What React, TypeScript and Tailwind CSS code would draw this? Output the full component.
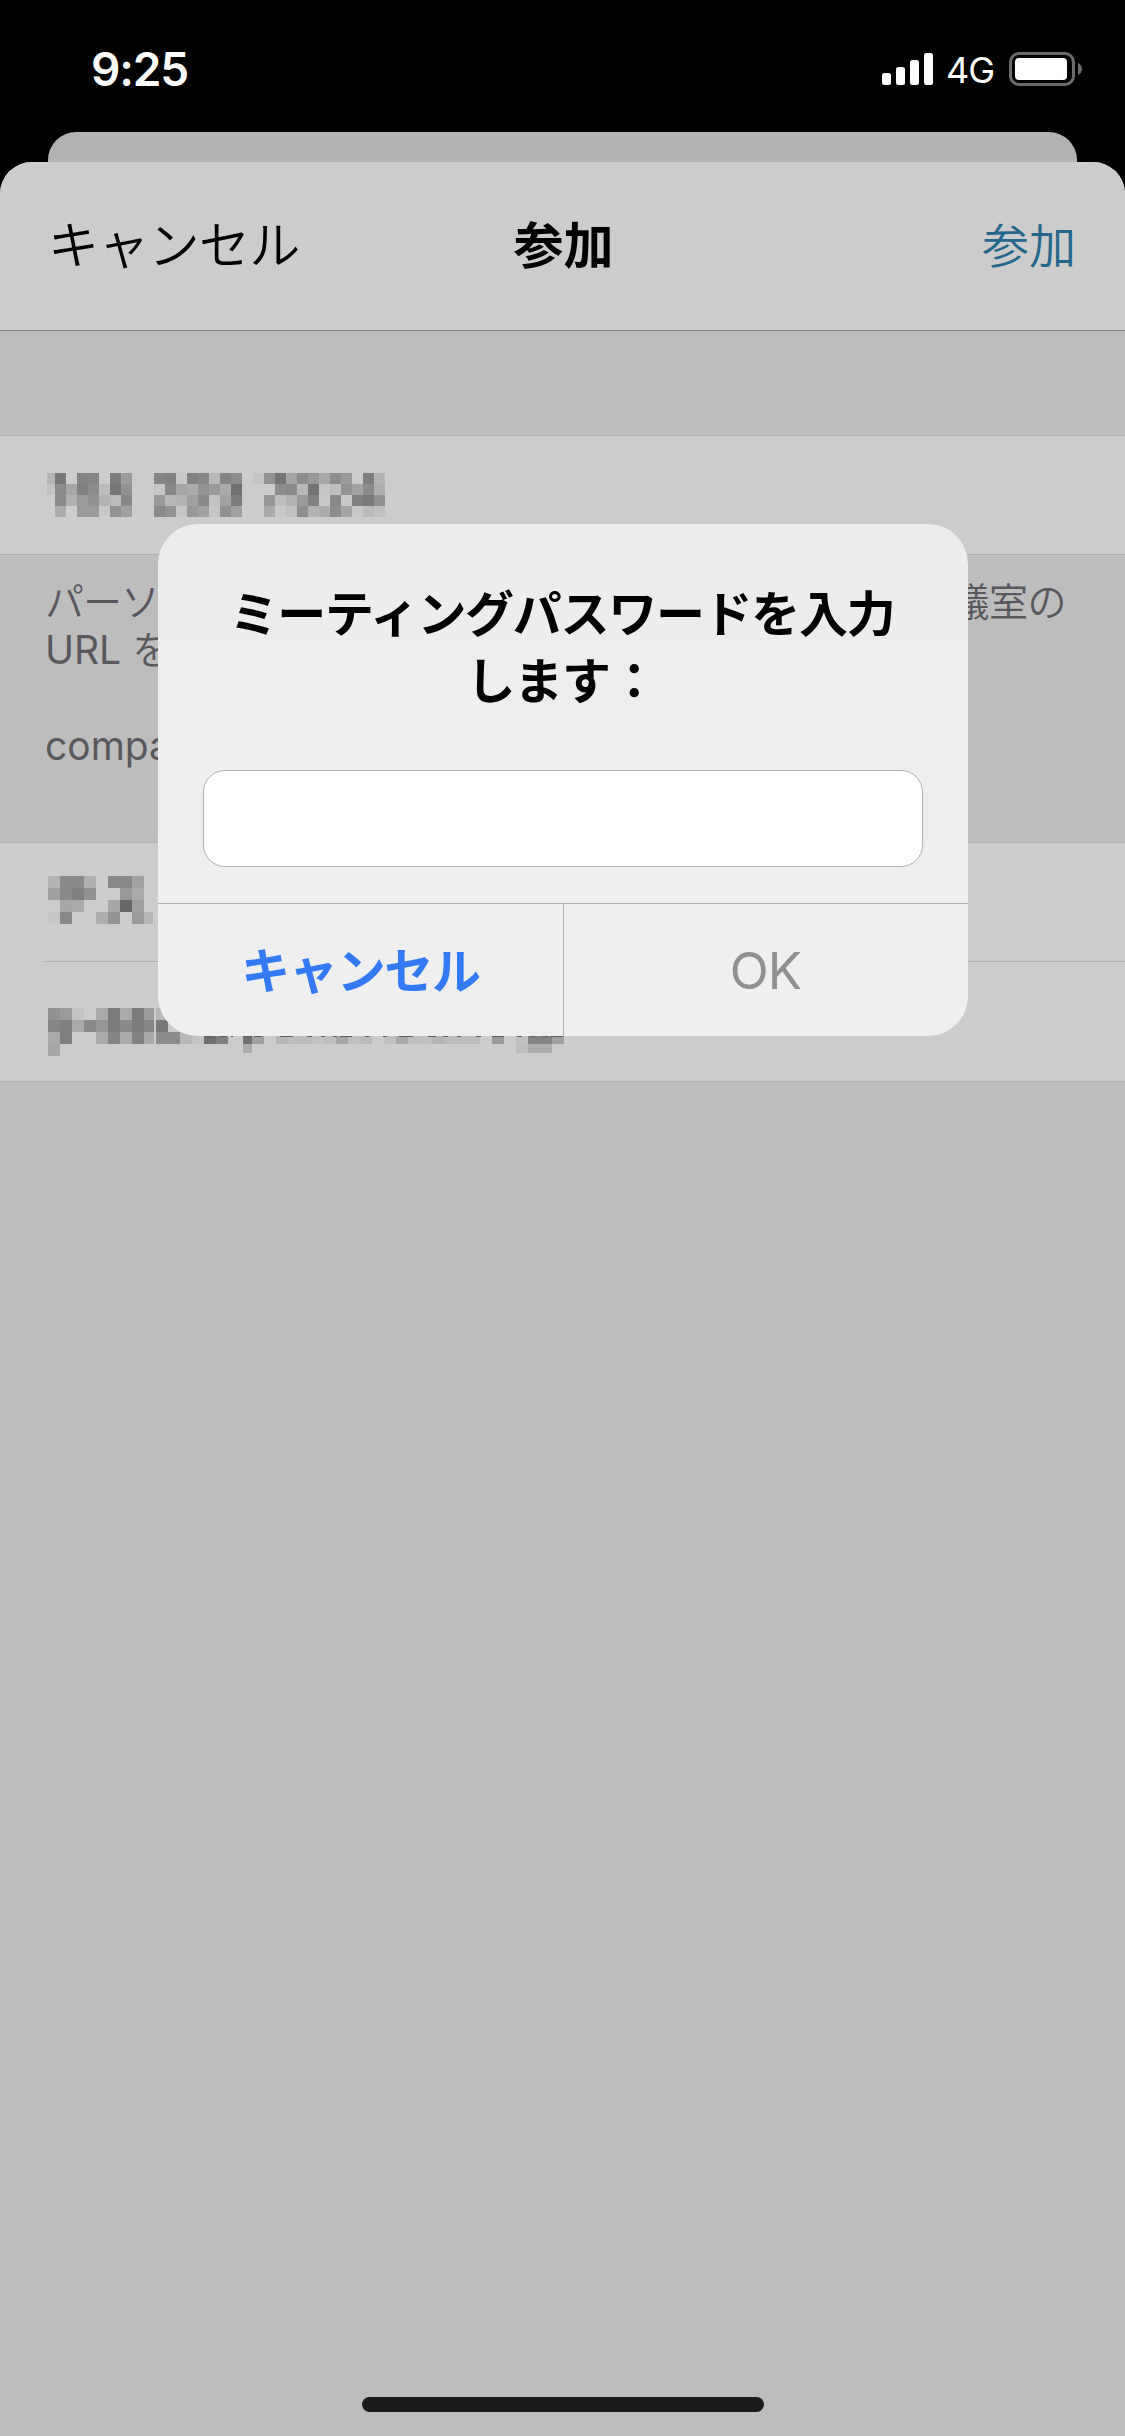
import React from 'react';

// Each token is the grey level of one cell, "--" leaves the cell empty
const meetingId = {
    lead: ['b4', 'c2'],
    rows: [
        '78 -- 84 86 -- 7c 9c -- -- 86 82 c8 82 88 b8 84 8c -- c4 92 76 a4 8c 98 a8 8c 9a -- 80 b4',
        '8c a6 80 8c bc 76 92 -- -- c6 88 a6 ac 92 9a aa 70 -- -- -- 8c 8a b8 74 c6 be 92 a2 8c ae',
        '8c b0 9c 92 b4 ba 88 -- -- 9a b8 b2 a0 8a c2 a2 7c -- -- 96 be b2 9a 82 c8 88 c8 80 7a 92',
        'ac -- 9a 9a c8 92 a0 -- -- 8a 92 c6 98 a2 c6 90 a0 -- -- aa c8 c0 8e b2 ac 8c a4 c8 ba c0',
    ],
};

const displayName = [
    'b4 8a 8a b0 -- 88 88 a2',
    'a0 8a 80 92 -- -- 98 aa',
    '-- a6 aa -- -- a6 68 a0',
    'c6 88 -- -- ae 94 -- 9a b8',
];

const emailStart = [
    '92 9a c4 -- aa 7c aa 7c 9c',
    '86 80 aa 88 96 7c 8a 7c 86',
    'aa 80 -- -- aa 84 aa 82 a8',
    'a6',
];

const emailRest = [
    'b8',
    '78',
    '8c 8c b8 c4 6e 80',
];

const emailTail = 'b6 bc bb c2 be a6 c0 ba -- c0 a8 be c0 b4 bc bc bc -- 9a -- c0 84 84 a0';

const emailMarks = [
    [204, 8], [220, 6], [231, 2], [244, 8], [254, 8], [280, 13], [307, 5], [321, 4], [333, 4], [340, 12],
    [365, 4], [383, 4], [399, 14], [428, 8], [443, 5], [457, 4], [476, 5], [492, 12], [517, 5], [531, 4],
    [543, 5], [551, 12],
];

function Cells({ rows, size, x = 0, y = 0 }: { rows: string[]; size: number; x?: number; y?: number }) {
    return (
        <>
            {rows.map((row, r) =>
                row.split(' ').map((c, i) =>
                    c === '--' ? null : (
                        <rect key={`${r}-${i}`} x={x + i * size} y={y + r * size} width={size} height={size} fill={`#${c}${c}${c}`} />
                    )
                )
            )}
        </>
    );
}

function StatusBar() {
    return (
        <div className="flex h-[132px] items-start justify-between pr-[43px] pl-[91px]">
            <span className="mt-[41px] text-[46px] leading-[56px] font-semibold tracking-[-1.2px] text-white">9:25</span>
            <div className="mt-[52px] flex h-[34px] items-start">
                <svg width="51" height="34" fill="#fff">
                    <rect x="0" y="21" width="9" height="12" rx="2.5" />
                    <rect x="14" y="15" width="9" height="18" rx="2.5" />
                    <rect x="28" y="8" width="9" height="25" rx="2.5" />
                    <rect x="42" y="1" width="9" height="32" rx="2.5" />
                </svg>
                <span className="-mt-[4px] ml-[13px] w-[63px] text-[36px] leading-[44px] tracking-[-1px] text-white">4G</span>
                <svg width="73" height="34">
                    <rect x="1.5" y="1.5" width="63" height="31" rx="8.5" fill="none" stroke="#6b6b6b" strokeWidth="3" />
                    <rect x="6" y="6" width="52" height="22" rx="4" fill="#fff" />
                    <path d="M69 11c2.6 1.2 4 3.5 4 6s-1.400 4.800-4 6z" fill="#6b6b6b" />
                </svg>
            </div>
        </div>
    );
}

function PasswordAlert() {
    return (
        <div className="absolute top-[524px] left-[158px] flex h-[512px] w-[810px] flex-col overflow-hidden rounded-[40px] bg-gradient-to-b from-[#ebedec] to-[#efefef]">
            <h2 className="mt-[57px] h-[189px] pr-[2px] text-center text-[49px] leading-[67px] font-bold tracking-[-1.3px] text-black">
                ミーティングパスワードを入力
                <br />
                します：
            </h2>
            <input
                type="text"
                className="mx-[45px] h-[97px] rounded-[22px] border border-[#b0b0b1] bg-white px-5 text-[42px] outline-none"
            />
            <div className="mt-auto flex h-[133px] border-t border-[#b0b0b2]">
                <button className="w-[406px] border-r border-[#b0b0b2] pt-[3px] text-[49px] font-bold tracking-[-1.3px] text-[#347af7]">キャンセル</button>
                <button className="flex-1 pt-[2px] pr-[1px] text-[51px] tracking-[-1px] text-[#909090]">OK</button>
            </div>
        </div>
    );
}

export default function App() {
    return (
        <div className="relative flex h-[2436px] w-[1125px] flex-col overflow-hidden bg-black font-['Inter','Noto_Sans_CJK_JP',sans-serif]">
            <StatusBar />
            <div className="mx-[48px] -mb-[40px] h-[70px] shrink-0 rounded-t-[28px] bg-[#b2b2b2]" />

            <main className="relative flex flex-1 flex-col rounded-t-[32px] bg-[#bdbdbd]">
                <header className="grid h-[169px] grid-cols-3 items-center rounded-t-[32px] border-b border-[#848486] bg-[#cccccc] pr-[49px] pl-[48px] text-[51px]">
                    <button className="justify-self-start font-[350] tracking-[-0.7px] text-black">キャンセル</button>
                    <h1 className="justify-self-center pt-[1px] pl-[3px] text-[50px] font-bold text-black">参加</h1>
                    <button className="justify-self-end text-[47px] font-[350] text-[#24678c]">参加</button>
                </header>

                <div className="mt-[104px] h-[120px] border-y border-[#b0b0b2] bg-[#cccccc] pt-[37px] pl-[47px]">
                    <svg width="338" height="44" shapeRendering="crispEdges">
                        {meetingId.lead.map((c, i) => (
                            <rect key={i} y={i * 11} width="8" height="11" fill={`#${c}${c}${c}`} />
                        ))}
                        <Cells rows={meetingId.rows} size={11} x={8} />
                    </svg>
                </div>

                <div className="h-[287px] pt-[23px] pr-[59px] pl-[45px] text-[39px] leading-[48px] text-[#59595d]">
                    <p className="flex justify-between font-[350] whitespace-nowrap">
                        <span className="tracking-[-1px]">パーソナ</span>
                        <span className="tracking-[-0.5px]">議室の</span>
                    </p>
                    <p>URL <span className="font-[350]">を</span></p>
                    <p className="mt-[48px]">compa</p>
                </div>

                <div className="h-[240px] border-y border-[#b0b0b2] bg-[#cccccc] pl-[45px]">
                    <div className="h-[119px] border-b border-[#b0b0b2] pt-[33px] pl-[3px]">
                        <svg width="105" height="48" shapeRendering="crispEdges">
                            <Cells rows={displayName} size={12} />
                        </svg>
                    </div>
                    <div className="h-[119px] pt-[46px] pl-[3px]">
                        <svg width="528" height="48" viewBox="48 0 528 48" shapeRendering="crispEdges">
                            <Cells rows={emailStart} size={12} x={48} />
                            <rect x="154" width="2" height="36" fill="#cccccc" />
                            <Cells rows={emailRest} size={12} x={156} />
                            <rect x="243" y="24" width="9" height="12" fill="#727272" />
                            <rect x="252" y="24" width="12" height="12" fill="#a0a0a0" />
                            <rect x="243" y="36" width="9" height="9" fill="#aaaaaa" />
                            <Cells rows={[emailTail]} size={12} x={276} y={24} />
                            <rect x="516" y="36" width="12" height="9" fill="#bebebe" />
                            <rect x="528" y="36" width="24" height="9" fill="#aeaeae" />
                            {emailMarks.map(([x, w]) => (
                                <rect key={x} x={x} y="28" width={w} height="1" fill="#5c5c5c" />
                            ))}
                        </svg>
                    </div>
                </div>

                <div className="mx-auto mt-auto mb-[24px] h-[15px] w-[402px] rounded-full bg-[#1b1b1b]" />
            </main>

            <PasswordAlert />
        </div>
    );
}
